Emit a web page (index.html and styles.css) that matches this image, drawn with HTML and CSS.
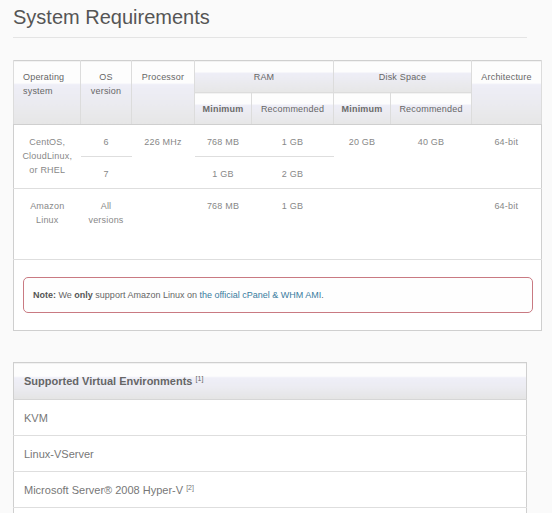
FILE: index.html
```html
<!DOCTYPE html>
<html>
<head>
<meta charset="utf-8">
<link rel="stylesheet" href="styles.css">
</head>
<body>
<div class="page">
  <h1 class="title">System Requirements</h1>
  <div class="rule"></div>

  <table class="req">
    <colgroup>
      <col class="c1"><col class="c2"><col class="c3"><col class="c4"><col class="c5"><col class="c6"><col class="c7"><col class="c8">
    </colgroup>
    <thead>
      <tr class="h1row">
        <th rowspan="2" class="left">Operating<br>system</th>
        <th rowspan="2">OS<br>version</th>
        <th rowspan="2">Processor</th>
        <th colspan="2">RAM</th>
        <th colspan="2">Disk Space</th>
        <th rowspan="2">Architecture</th>
      </tr>
      <tr class="h2row">
        <th class="b">Minimum</th>
        <th>Recommended</th>
        <th class="b">Minimum</th>
        <th>Recommended</th>
      </tr>
    </thead>
    <tbody>
      <tr class="sub">
        <td rowspan="2">CentOS,<br>CloudLinux,<br>or RHEL</td>
        <td class="split">6</td>
        <td rowspan="2">226 MHz</td>
        <td class="split">768 MB</td>
        <td class="split">1 GB</td>
        <td rowspan="2">20 GB</td>
        <td rowspan="2">40 GB</td>
        <td rowspan="2">64-bit</td>
      </tr>
      <tr class="sub last">
        <td>7</td>
        <td>1 GB</td>
        <td>2 GB</td>
      </tr>
      <tr class="amazon">
        <td>Amazon<br>Linux</td>
        <td>All<br>versions</td>
        <td></td>
        <td>768 MB</td>
        <td>1 GB</td>
        <td></td>
        <td></td>
        <td>64-bit</td>
      </tr>
      <tr>
        <td colspan="8" class="notecell">
          <div class="note"><b>Note:</b> We <b>only</b> support Amazon Linux on <a href="#">the official cPanel &amp; WHM AMI</a>.</div>
        </td>
      </tr>
    </tbody>
  </table>

  <table class="virt">
    <thead>
      <tr><th>Supported Virtual Environments <sup>[1]</sup></th></tr>
    </thead>
    <tbody>
      <tr><td>KVM</td></tr>
      <tr><td>Linux-VServer</td></tr>
      <tr><td>Microsoft Server® 2008 Hyper-V <sup>[2]</sup></td></tr>
      <tr><td class="empty"></td></tr>
    </tbody>
  </table>
</div>
</body>
</html>
```

FILE: styles.css
```css
html, body {
  margin: 0;
  padding: 0;
  background: #fafafa;
  font-family: "Liberation Sans", Arial, sans-serif;
}

.page {
  padding: 5px 0 0 13px;
}

.title {
  margin: 0;
  font-size: 20px;
  line-height: 24px;
  font-weight: normal;
  color: #555;
}

.rule {
  width: 514px;
  height: 1px;
  margin-top: 8px;
  background: #e4e4e4;
}

.req {
  margin-top: 22px;
  width: 528px;
  table-layout: fixed;
  border-collapse: collapse;
  border: 1px solid #cfcfcf;
  background: #fff;
  font-size: 9px;
  letter-spacing: 0.2px;
}

.c1 { width: 67px; }
.c2 { width: 51px; }
.c3 { width: 63px; }
.c4 { width: 57px; }
.c5 { width: 82px; }
.c6 { width: 57px; }
.c7 { width: 81px; }
.c8 { width: 70px; }

.req th {
  font-weight: normal;
  color: #666;
  line-height: 14px;
  padding: 9px 4px 0;
  vertical-align: top;
  text-align: center;
  border-left: 1px solid #dcdcdc;
  border-right: 1px solid #dcdcdc;
  border-bottom: 1px solid #dcdcdc;
  background: linear-gradient(to bottom, #fdfdfd 0%, #fdfdfd 35%, #eeeef7 36%, #ebebf0 65%, #e6e6e6 100%);
}

.req th.left {
  text-align: left;
  padding-left: 9px;
}

.req th.b {
  font-weight: bold;
  color: #6a6a6a;
}

.req .h1row th { height: 22px; }
.req .h2row th { height: 22px; border-bottom: 1px solid #cfcfcf; }
.req .h1row th[rowspan] { border-bottom: 1px solid #cfcfcf; }

.req td {
  color: #888;
  line-height: 14px;
  text-align: center;
  vertical-align: top;
  padding: 10px 2px 0;
}

.req .sub td { height: 21px; }
.req td.split { border-bottom: 1px solid #dedede; }
.req .last td { border-bottom: 1px solid #dedede; }
.req .sub td[rowspan] { border-bottom: 1px solid #dedede; }
.req .amazon td { height: 60px; border-bottom: 1px solid #dedede; }

.req td.notecell {
  text-align: left;
  padding: 17px 8px 17px 9px;
}

.note {
  border: 1px solid #c97a82;
  border-radius: 5px;
  padding: 10px 9px;
  color: #666;
  background: #fefefe;
  letter-spacing: 0;
}

.note b { font-weight: bold; color: #555; }

.note a {
  color: #3a7ca0;
  text-decoration: none;
}

.virt {
  margin-top: 31px;
  width: 514px;
  border-collapse: collapse;
  border: 1px solid #cfcfcf;
  background: #fff;
}

.virt th {
  text-align: left;
  font-size: 11px;
  font-weight: bold;
  color: #666;
  height: 37px;
  padding: 0 10px;
  box-sizing: border-box;
  border-bottom: 1px solid #d6d6d6;
  background: linear-gradient(to bottom, #fdfdfd 0%, #fdfdfd 37%, #efeff8 38%, #ececf2 65%, #e4e4e4 100%);
}

.virt td {
  font-size: 11px;
  color: #777;
  height: 36px;
  padding: 0 10px;
  box-sizing: border-box;
  border-bottom: 1px solid #dedede;
}

.virt sup {
  font-size: 7px;
  font-weight: normal;
  vertical-align: 4px;
}
```
